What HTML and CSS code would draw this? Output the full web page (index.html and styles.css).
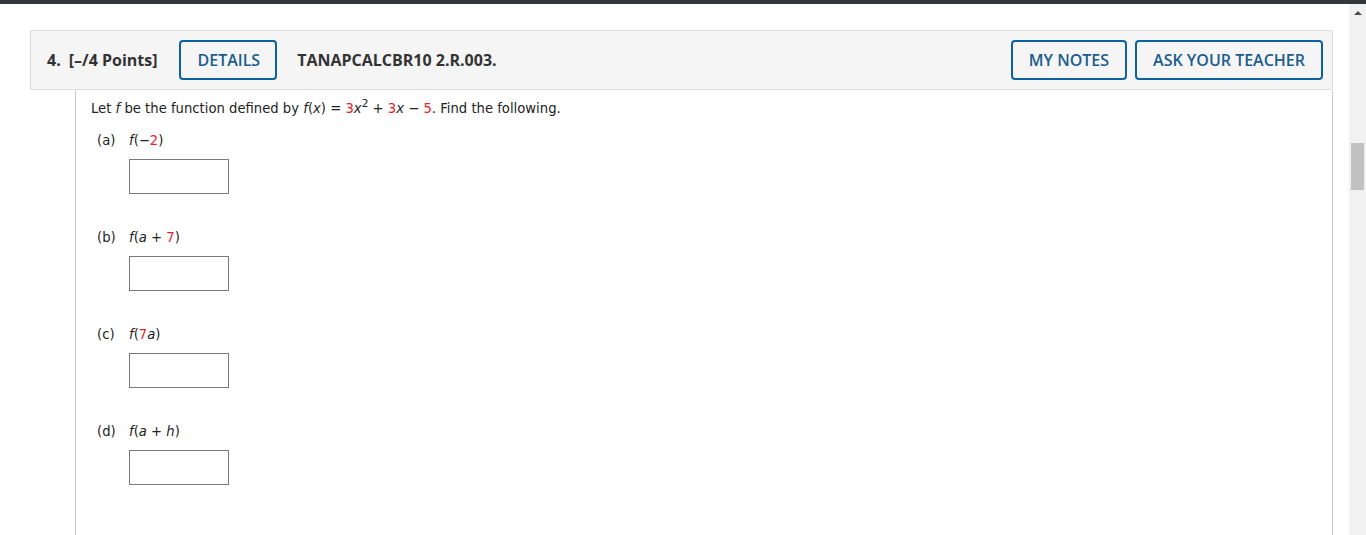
FILE: index.html
```html
<!DOCTYPE html>
<html lang="en">
<head>
<meta charset="utf-8">
<title>Question 4</title>
<link rel="stylesheet" href="styles.css">
</head>
<body>
<div class="topbar"></div>
<div class="frame">
  <main class="page">
    <section class="question">
      <header class="qhead">
        <span class="qnum">4.</span>
        <span class="pts">[–/4 Points]</span>
        <button class="btn btn-details">DETAILS</button>
        <span class="qid">TANAPCALCBR10 2.R.003.</span>
        <span class="spacer"></span>
        <button class="btn">MY NOTES</button>
        <button class="btn">ASK YOUR TEACHER</button>
      </header>
      <div class="qbody">
        <p class="stem">Let <i>f</i> be the function defined by <i>f</i>(<i>x</i>) = <span class="red">3</span><i>x</i><sup>2</sup> + <span class="red">3</span><i>x</i> − <span class="red">5</span>. Find the following.</p>
        <div class="part">
          <div class="plabel"><span class="pl">(a)</span><span class="pe"><i>f</i>(−<span class="red">2</span>)</span></div>
          <div class="answer"></div>
        </div>
        <div class="part">
          <div class="plabel"><span class="pl">(b)</span><span class="pe"><i>f</i>(<i>a</i> + <span class="red">7</span>)</span></div>
          <div class="answer"></div>
        </div>
        <div class="part">
          <div class="plabel"><span class="pl">(c)</span><span class="pe"><i>f</i>(<span class="red">7</span><i>a</i>)</span></div>
          <div class="answer"></div>
        </div>
        <div class="part">
          <div class="plabel"><span class="pl">(d)</span><span class="pe"><i>f</i>(<i>a</i> + <i>h</i>)</span></div>
          <div class="answer"></div>
        </div>
      </div>
    </section>
  </main>
  <div class="scrollbar">
    <span class="arrow"></span>
    <span class="thumb"></span>
  </div>
</div>
</body>
</html>
```
FILE: styles.css
```css
* { box-sizing: border-box; }
html, body { margin: 0; padding: 0; height: 100%; overflow: hidden; background: #fff; }
body { display: flex; flex-direction: column; }
.topbar { height: 4px; background: #35363a; flex: none; }
.frame { flex: 1; display: flex; min-height: 0; }
.page { flex: 1; padding: 26px 16px 0 30px; min-width: 0; }
.question { display: flex; flex-direction: column; height: 100%; }
.qhead {
  height: 60px;
  flex: none;
  display: flex;
  align-items: center;
  padding: 0 9px 0 16px;
  background: #f5f5f5;
  border: 1px solid #dcdcdc;
  border-radius: 2px;
  font-family: "Open Sans", sans-serif;
  font-size: 16px;
  color: #333;
}
.qnum { font-weight: 700; margin-right: 8px; }
.pts { font-weight: 700; margin-right: 22px; }
.qid { font-weight: 700; margin-left: 20px; }
.spacer { flex: 1; }
.btn {
  height: 40px;
  padding: 0 16px;
  background: transparent;
  border: 2px solid #0f639c;
  border-radius: 4px;
  font-family: "Open Sans", sans-serif;
  font-size: 16px;
  font-weight: 600;
  color: #1b5d8e;
  margin-left: 8px;
}
.btn-details { margin-left: 0; padding: 0 15px 0 16px; }
.qbody {
  flex: 1;
  margin-left: 45px;
  border-left: 1px solid #cfcfcf;
  border-right: 1px solid #cfcfcf;
  padding: 9px 15px 0;
  font-family: "DejaVu Sans", Verdana, sans-serif;
  font-size: 13.2px;
  color: #222;
}
.stem { margin: 0 0 12px; line-height: 20px; }
.stem sup { font-size: 10.5px; line-height: 0; vertical-align: 6px; }
.red { color: #e8202a; }
.part { padding-left: 6px; margin-bottom: 34px; }
.plabel { display: flex; line-height: 20px; height: 20px; }
.pl { width: 32px; }
.answer {
  margin: 8px 0 0 32px;
  width: 100px;
  height: 35px;
  border: 1px solid #7a7a7a;
  background: #fff;
}
.scrollbar {
  width: 17px;
  flex: none;
  background: #f1f1f1;
  display: flex;
  flex-direction: column;
  align-items: center;
}
.arrow {
  margin-top: 7px;
  width: 0;
  height: 0;
  border-left: 4px solid transparent;
  border-right: 4px solid transparent;
  border-bottom: 4px solid #505050;
}
.thumb {
  margin-top: 128px;
  width: 13px;
  height: 47px;
  background: #c1c1c1;
}
```
